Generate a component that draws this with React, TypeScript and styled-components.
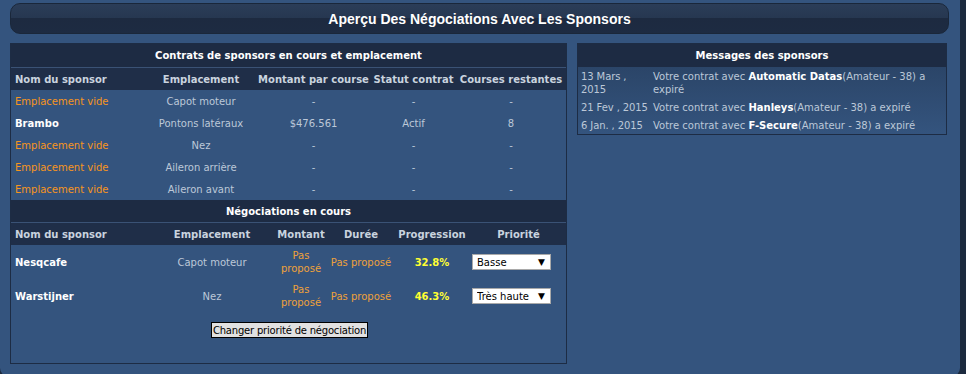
import React from "react";
import styled, { createGlobalStyle } from "styled-components";

const GlobalStyle = createGlobalStyle`
  html, body { margin: 0; padding: 0; }
  body {
    background: #1c2a3e;
    font-family: "DejaVu Sans", Verdana, sans-serif;
    font-size: 10px;
    overflow: hidden;
  }
`;

const Page = styled.div`
  width: 960px;
  height: 376px;
  background: #34547e;
  border-radius: 0 0 8px 8px;
  box-sizing: border-box;
  padding-top: 3px;
`;

const Header = styled.div`
  margin: 0 11px 0 10px;
  height: 31px;
  box-sizing: border-box;
  border-radius: 10px;
  border: 1px solid #1a273a;
  background: linear-gradient(#2b3d58 0%, #263750 50%, #1d2a40 50%, #1d2b42 100%);
  display: flex;
  align-items: center;
  justify-content: center;
  color: #ffffff;
  font-family: "Liberation Sans", Arial, sans-serif;
  font-weight: bold;
  font-size: 14px;
`;

const Content = styled.div`
  display: flex;
  gap: 10px;
  padding: 9px 10px 0 10px;
  align-items: flex-start;
`;

const Panel = styled.div<{ $w: number; $h?: number }>`
  width: ${(p) => p.$w}px;
  ${(p) => (p.$h ? `height: ${p.$h}px;` : "")}
  box-sizing: border-box;
  border: 1px solid #1d2c44;
`;

const Table = styled.table`
  width: 100%;
  border-collapse: collapse;
  table-layout: fixed;
`;

const TitleCell = styled.th<{ $h: number }>`
  height: ${(p) => p.$h}px;
  padding: 0;
  background: #1d2b43;
  color: #ffffff;
  font-weight: bold;
  font-size: 10px;
  text-align: center;
`;

const HeadRow = styled.tr`
  background: #1f2e48;
  border-top: 1px solid #3a5275;
`;

const HeadCell = styled.th<{ $left?: boolean; $h: number }>`
  height: ${(p) => p.$h}px;
  padding: 0 0 0 ${(p) => (p.$left ? "4px" : "0")};
  color: #c9d3df;
  font-weight: bold;
  font-size: 10px;
  white-space: nowrap;
  text-align: ${(p) => (p.$left ? "left" : "center")};
`;

const Cell = styled.td<{ $left?: boolean; $pad?: number; $h: number; $tone?: string; $bold?: boolean }>`
  height: ${(p) => p.$h}px;
  padding: 0 0 0 ${(p) => (p.$left ? `${p.$pad ?? 4}px` : "0")};
  text-align: ${(p) => (p.$left ? "left" : "center")};
  color: ${(p) => p.$tone || "#bcc8d8"};
  font-weight: ${(p) => (p.$bold ? "bold" : "normal")};
  font-size: 10px;
  line-height: 13px;
  vertical-align: middle;
`;

const SelectWrap = styled.span`
  position: relative;
  display: inline-block;
  width: 79px;
  height: 16px;
  vertical-align: middle;
`;

const Select = styled.select`
  appearance: none;
  -webkit-appearance: none;
  width: 79px;
  height: 16px;
  box-sizing: border-box;
  border: 1px solid #a9a9a9;
  border-radius: 0;
  background: #ffffff;
  color: #000000;
  font-family: "DejaVu Sans", Verdana, sans-serif;
  font-size: 10px;
  padding: 0 0 0 4px;
  margin: 0;
  display: block;
`;

const Arrow = styled.span`
  position: absolute;
  right: 6px;
  top: 2px;
  font-size: 9px;
  color: #000;
  pointer-events: none;
`;

const ButtonRow = styled.div`
  display: flex;
  justify-content: center;
  padding-top: 9px;
  padding-left: 2px;
`;

const Button = styled.button`
  height: 16px;
  box-sizing: border-box;
  border: 1px solid #000;
  background: #e1e1e1;
  color: #000;
  font-family: "DejaVu Sans", Verdana, sans-serif;
  font-size: 10px;
  letter-spacing: -0.2px;
  padding: 0 1px;
  line-height: 13px;
`;

const MsgBody = styled.tbody`
  background: linear-gradient(#2b4568, #34547e);
`;

const MsgCell = styled.td<{ $date?: boolean }>`
  padding: 3px ${(p) => (p.$date ? "0" : "3px")} 2px 3px;
  color: #bcc8d8;
  font-size: 10px;
  line-height: 13px;
  vertical-align: top;
  ${(p) => (p.$date ? "letter-spacing: -0.1px;" : "")}
`;

const Strong = styled.b`
  color: #ffffff;
`;

const ORANGE = "#f7941d";
const PAS = "#eea13a";
const YELLOW = "#ffff33";
const WHITE = "#ffffff";

const contracts = [
  { name: "Emplacement vide", loc: "Capot moteur", amt: "-", st: "-", left: "-", empty: true },
  { name: "Brambo", loc: "Pontons latéraux", amt: "$476.561", st: "Actif", left: "8", empty: false },
  { name: "Emplacement vide", loc: "Nez", amt: "-", st: "-", left: "-", empty: true },
  { name: "Emplacement vide", loc: "Aileron arrière", amt: "-", st: "-", left: "-", empty: true },
  { name: "Emplacement vide", loc: "Aileron avant", amt: "-", st: "-", left: "-", empty: true },
];

const negos = [
  { name: "Nesqcafe", loc: "Capot moteur", prog: "32.8%", prio: "Basse" },
  { name: "Warstijner", loc: "Nez", prog: "46.3%", prio: "Très haute" },
];

const messages = [
  { date: "13 Mars , 2015", who: "Automatic Datas" },
  { date: "21 Fev , 2015", who: "Hanleys" },
  { date: "6 Jan. , 2015", who: "F-Secure" },
];

export default function App() {
  return (
    <>
      <GlobalStyle />
      <Page>
        <Header>Aperçu Des Négociations Avec Les Sponsors</Header>
        <Content>
          <Panel $w={557} $h={321}>
            <Table>
              <colgroup>
                <col style={{ width: 135 }} />
                <col style={{ width: 110 }} />
                <col style={{ width: 115 }} />
                <col style={{ width: 85 }} />
                <col />
              </colgroup>
              <thead>
                <tr>
                  <TitleCell $h={23} colSpan={5}>Contrats de sponsors en cours et emplacement</TitleCell>
                </tr>
                <HeadRow>
                  <HeadCell $h={22} $left>Nom du sponsor</HeadCell>
                  <HeadCell $h={22}>Emplacement</HeadCell>
                  <HeadCell $h={22}>Montant par course</HeadCell>
                  <HeadCell $h={22}>Statut contrat</HeadCell>
                  <HeadCell $h={22}>Courses restantes</HeadCell>
                </HeadRow>
              </thead>
              <tbody>
                {contracts.map((c, i) => (
                  <tr key={i}>
                    <Cell $h={22} $left $tone={c.empty ? ORANGE : WHITE} $bold={!c.empty}>
                      {c.name}
                    </Cell>
                    <Cell $h={22}>{c.loc}</Cell>
                    <Cell $h={22}>{c.amt}</Cell>
                    <Cell $h={22}>{c.st}</Cell>
                    <Cell $h={22}>{c.left}</Cell>
                  </tr>
                ))}
              </tbody>
            </Table>
            <Table>
              <colgroup>
                <col style={{ width: 140 }} />
                <col style={{ width: 122 }} />
                <col style={{ width: 56 }} />
                <col style={{ width: 64 }} />
                <col style={{ width: 78 }} />
                <col />
              </colgroup>
              <thead>
                <tr>
                  <TitleCell $h={22} colSpan={6}>Négociations en cours</TitleCell>
                </tr>
                <HeadRow>
                  <HeadCell $h={22} $left>Nom du sponsor</HeadCell>
                  <HeadCell $h={22}>Emplacement</HeadCell>
                  <HeadCell $h={22}>Montant</HeadCell>
                  <HeadCell $h={22}>Durée</HeadCell>
                  <HeadCell $h={22}>Progression</HeadCell>
                  <HeadCell $h={22}>Priorité</HeadCell>
                </HeadRow>
              </thead>
              <tbody>
                {negos.map((n, i) => (
                  <tr key={i}>
                    <Cell $h={34} $left $tone={WHITE} $bold>{n.name}</Cell>
                    <Cell $h={34}>{n.loc}</Cell>
                    <Cell $h={34} $tone={PAS}>Pas<br />proposé</Cell>
                    <Cell $h={34} $tone={PAS}>Pas proposé</Cell>
                    <Cell $h={34} $tone={YELLOW} $bold>{n.prog}</Cell>
                    <Cell $h={34} $left $pad={1}>
                      <SelectWrap>
                        <Select defaultValue={n.prio}>
                          <option>Très basse</option>
                          <option>Basse</option>
                          <option>Normale</option>
                          <option>Haute</option>
                          <option>Très haute</option>
                        </Select>
                        <Arrow>▼</Arrow>
                      </SelectWrap>
                    </Cell>
                  </tr>
                ))}
              </tbody>
            </Table>
            <ButtonRow>
              <Button>Changer priorité de négociation</Button>
            </ButtonRow>
          </Panel>
          <Panel $w={370}>
            <Table>
              <colgroup>
                <col style={{ width: 72 }} />
                <col />
              </colgroup>
              <thead>
                <tr>
                  <TitleCell $h={23} colSpan={2}>Messages des sponsors</TitleCell>
                </tr>
              </thead>
              <MsgBody>
                {messages.map((m, i) => (
                  <tr key={i}>
                    <MsgCell $date>{m.date}</MsgCell>
                    <MsgCell>
                      Votre contrat avec <Strong>{m.who}</Strong>(Amateur - 38) a expiré
                    </MsgCell>
                  </tr>
                ))}
              </MsgBody>
            </Table>
          </Panel>
        </Content>
      </Page>
    </>
  );
}
